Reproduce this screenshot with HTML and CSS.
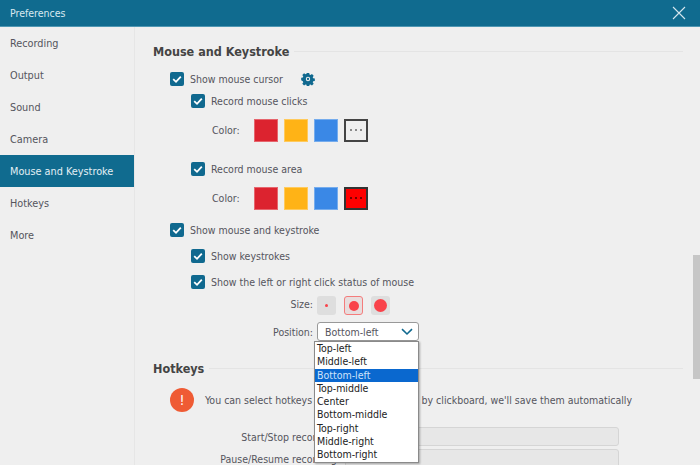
FILE: index.html
```html
<!DOCTYPE html>
<html lang="en">
<head>
    <meta charset="UTF-8">
    <title>Preferences</title>
    <link rel="stylesheet" href="styles.css">
</head>
<body>
    <div class="titlebar">
        <span>Preferences</span>
        <svg class="close" width="14" height="14" viewBox="0 0 14 14"><path d="M1 1L13 13M13 1L1 13" stroke="#d5e6ee" stroke-width="1.1" fill="none"/></svg>
    </div>
    <div class="main">
        <div class="sidebar">
            <div class="nav-item">Recording</div>
            <div class="nav-item">Output</div>
            <div class="nav-item">Sound</div>
            <div class="nav-item">Camera</div>
            <div class="nav-item active">Mouse and Keystroke</div>
            <div class="nav-item">Hotkeys</div>
            <div class="nav-item">More</div>
        </div>
        <div class="content">
            <div class="section-title"><h2>Mouse and Keystroke</h2><div class="rule"></div></div>

            <div class="check-row top-row">
                <span class="box"><svg width="14" height="14" viewBox="0 0 14 14"><path d="M3.2 7.2L6 9.8L10.8 4.6" stroke="#fff" stroke-width="1.8" fill="none"/></svg></span>
                <span>Show mouse cursor</span>
                <svg class="gear" width="14" height="14" viewBox="-1 -1 16 16"><path fill-rule="evenodd" fill="#10698f" d="M5.6 0h2.8l.3 1.9 1.2.5 1.6-1.1 2 2-1.1 1.6.5 1.2 1.9.3v2.8l-1.9.3-.5 1.2 1.1 1.6-2 2-1.6-1.1-1.2.5-.3 1.9H5.6l-.3-1.9-1.2-.5-1.6 1.1-2-2 1.1-1.6-.5-1.2L-.8 8.4V5.6l1.9-.3.5-1.2L.5 2.5l2-2 1.6 1.1 1.2-.5zM7 4.5a2.5 2.5 0 1 0 0 5 2.5 2.5 0 0 0 0-5z"/><circle cx="7" cy="7" r="1.3" fill="#10698f"/></svg>
            </div>
            <div class="check-row sub clicks-row">
                <span class="box"><svg width="14" height="14" viewBox="0 0 14 14"><path d="M3.2 7.2L6 9.8L10.8 4.6" stroke="#fff" stroke-width="1.8" fill="none"/></svg></span>
                <span>Record mouse clicks</span>
            </div>
            <div class="color-row">
                <span class="color-label">Color:</span>
                <span class="swatch red"></span>
                <span class="swatch yellow"></span>
                <span class="swatch blue"></span>
                <span class="swatch more"><i></i><i></i><i></i></span>
            </div>
            <div class="check-row sub area-row">
                <span class="box"><svg width="14" height="14" viewBox="0 0 14 14"><path d="M3.2 7.2L6 9.8L10.8 4.6" stroke="#fff" stroke-width="1.8" fill="none"/></svg></span>
                <span>Record mouse area</span>
            </div>
            <div class="color-row">
                <span class="color-label">Color:</span>
                <span class="swatch red"></span>
                <span class="swatch yellow"></span>
                <span class="swatch blue"></span>
                <span class="swatch more picked"><i></i><i></i><i></i></span>
            </div>
            <div class="check-row keystroke-row">
                <span class="box"><svg width="14" height="14" viewBox="0 0 14 14"><path d="M3.2 7.2L6 9.8L10.8 4.6" stroke="#fff" stroke-width="1.8" fill="none"/></svg></span>
                <span>Show mouse and keystroke</span>
            </div>
            <div class="check-row sub gap-row">
                <span class="box"><svg width="14" height="14" viewBox="0 0 14 14"><path d="M3.2 7.2L6 9.8L10.8 4.6" stroke="#fff" stroke-width="1.8" fill="none"/></svg></span>
                <span>Show keystrokes</span>
            </div>
            <div class="check-row sub gap-row">
                <span class="box"><svg width="14" height="14" viewBox="0 0 14 14"><path d="M3.2 7.2L6 9.8L10.8 4.6" stroke="#fff" stroke-width="1.8" fill="none"/></svg></span>
                <span>Show the left or right click status of mouse</span>
            </div>
            <div class="size-row">
                <span class="field-label size-label">Size:</span>
                <span class="size-btn"><i class="dot small"></i></span>
                <span class="size-btn selected"><i class="dot medium"></i></span>
                <span class="size-btn"><i class="dot large"></i></span>
            </div>
            <div class="position-row">
                <span class="field-label">Position:</span>
                <div class="select">
                    <span>Bottom-left</span>
                    <svg width="12" height="8" viewBox="0 0 12 8"><path d="M1 1.2L6 6L11 1.2" stroke="#10698f" stroke-width="1.6" fill="none"/></svg>
                </div>
            </div>

            <div class="section-title hotkeys-title"><h2>Hotkeys</h2><div class="rule"></div></div>
            <div class="notice">
                <span class="notice-icon">!</span>
                <span>You can select hotkeys and input the hotkeys by clickboard, we'll save them automatically</span>
            </div>
            <div class="hotkey-row first">
                <span class="hotkey-label">Start/Stop recording:</span>
                <div class="hotkey-input"></div>
            </div>
            <div class="hotkey-row">
                <span class="hotkey-label">Pause/Resume recording:</span>
                <div class="hotkey-input">Ctrl+Alt+S</div>
            </div>

            <ul class="dropdown">
                <li>Top-left</li>
                <li>Middle-left</li>
                <li class="current">Bottom-left</li>
                <li>Top-middle</li>
                <li>Center</li>
                <li>Bottom-middle</li>
                <li>Top-right</li>
                <li>Middle-right</li>
                <li>Bottom-right</li>
            </ul>
            <div class="scroll-thumb"></div>
        </div>
    </div>
</body>
</html>
```

FILE: styles.css
```css
* {
    box-sizing: border-box;
}
html, body {
    margin: 0;
    height: 465px;
    overflow: hidden;
}
body {
    font-family: "DejaVu Sans Condensed", "Open Sans", sans-serif;
    font-size: 10.5px;
    color: #55555d;
    background-color: #efefef;
}
.titlebar {
    height: 27px;
    background-color: #106b8f;
    border-bottom: 1px solid #4f97b3;
    color: #d9e9f0;
    padding: 0 10px;
    display: flex;
    align-items: center;
    justify-content: space-between;
}
.close {
    margin-right: 4px;
}
.main {
    display: flex;
    height: 438px;
}
.sidebar {
    width: 135px;
    flex-shrink: 0;
    border-right: 1px solid #e6e6e6;
    font-size: 10.8px;
}
.nav-item {
    height: 32px;
    line-height: 30px;
    padding: 2px 0 0 10px;
}
.nav-item.active {
    background-color: #106b8f;
    color: #e3eff4;
}
.content {
    position: relative;
    flex: 1;
    padding: 16px 0 0 18px;
    overflow: hidden;
}
.section-title {
    display: flex;
    align-items: center;
    gap: 5px;
    width: 530px;
    height: 16px;
}
.section-title h2 {
    margin: 0;
    font-size: 12.5px;
    font-weight: 700;
    color: #444;
}
.rule {
    flex: 1;
    height: 1px;
    background-color: #e4e4e4;
}
.check-row {
    display: flex;
    align-items: center;
    gap: 6px;
    height: 14px;
    padding-left: 17px;
}
.check-row.sub {
    padding-left: 38px;
}
.top-row {
    margin-top: 13px;
}
.clicks-row {
    margin-top: 8px;
}
.area-row {
    margin-top: 20px;
}
.keystroke-row {
    margin-top: 13px;
}
.gap-row {
    margin-top: 12px;
}
.box {
    width: 14px;
    height: 14px;
    border-radius: 2px;
    background-color: #10698f;
    flex-shrink: 0;
}
.box svg {
    display: block;
}
.gear {
    margin-left: 12px;
}
.color-row {
    display: flex;
    align-items: center;
    gap: 6px;
    margin-top: 10px;
    padding-left: 59px;
    height: 24px;
}
.color-label {
    width: 36px;
}
.swatch {
    width: 24px;
    height: 23px;
    border: 1px solid rgba(255, 255, 255, 0.3);
    display: flex;
    align-items: center;
    justify-content: center;
    gap: 3px;
}
.red { background-color: #dc232f; }
.yellow { background-color: #ffb316; }
.blue { background-color: #3a88e6; }
.more {
    background-color: #efefef;
    border: 2px solid #444;
}
.more i {
    width: 2px;
    height: 2px;
    background-color: #8a8a8a;
}
.more.picked {
    background-color: #fe0000;
    border-color: #333;
}
.more.picked i {
    background-color: #700;
}
.size-row, .position-row {
    display: flex;
    align-items: center;
    height: 19px;
    margin-top: 7px;
}
.field-label {
    width: 160px;
    margin-right: 4px;
    text-align: right;
}
.size-label {
    padding-bottom: 3px;
}
.size-row .size-btn {
    margin-right: 8px;
}
.size-btn {
    width: 19px;
    height: 19px;
    border-radius: 3px;
    background-color: #dedede;
    display: flex;
    align-items: center;
    justify-content: center;
}
.size-btn.selected {
    border: 1px solid #f47c7c;
    background-color: #e8dddd;
}
.dot {
    display: block;
    border-radius: 50%;
    background-color: #f9424a;
}
.dot.small { width: 3px; height: 3px; }
.dot.medium { width: 10px; height: 10px; }
.dot.large { width: 13px; height: 13px; }
.select {
    width: 102px;
    height: 19px;
    background-color: #fff;
    border: 1px solid #999;
    border-radius: 3px;
    display: flex;
    align-items: center;
    justify-content: space-between;
    padding: 0 5px 0 7px;
}
.hotkeys-title {
    margin-top: 19px;
}
.notice {
    display: flex;
    align-items: center;
    gap: 11px;
    margin-top: 12px;
    padding-left: 17px;
    height: 24px;
    white-space: nowrap;
}
.notice-icon {
    width: 24px;
    height: 24px;
    border-radius: 50%;
    background-color: #ef5b34;
    color: #fff;
    font-size: 14px;
    text-align: center;
    line-height: 24px;
    flex-shrink: 0;
}
.hotkey-row {
    display: flex;
    align-items: center;
    margin-top: 3px;
    height: 19px;
}
.hotkey-row.first {
    margin-top: 15px;
}
.hotkey-label {
    width: 192px;
    text-align: right;
    padding-right: 5px;
    white-space: nowrap;
    flex-shrink: 0;
}
.hotkey-input {
    width: 274px;
    height: 19px;
    line-height: 17px;
    background-color: #e7e7e7;
    border: 1px solid #d5d5d5;
    border-radius: 3px;
    padding-left: 6px;
}
.dropdown {
    position: absolute;
    left: 179px;
    top: 314px;
    width: 105px;
    margin: 0;
    padding: 0;
    list-style: none;
    background-color: #fff;
    border: 1px solid #8a8a8a;
    box-shadow: 1px 1px 2px rgba(0, 0, 0, 0.3);
    color: #222;
}
.dropdown li {
    height: 13.3px;
    line-height: 13.3px;
    padding-left: 2px;
}
.dropdown li.current {
    background-color: #0a68cf;
    color: #cfe3fa;
}
.scroll-thumb {
    position: absolute;
    right: 0;
    top: 228px;
    width: 7px;
    height: 124px;
    background-color: #c6c6c6;
}
```
